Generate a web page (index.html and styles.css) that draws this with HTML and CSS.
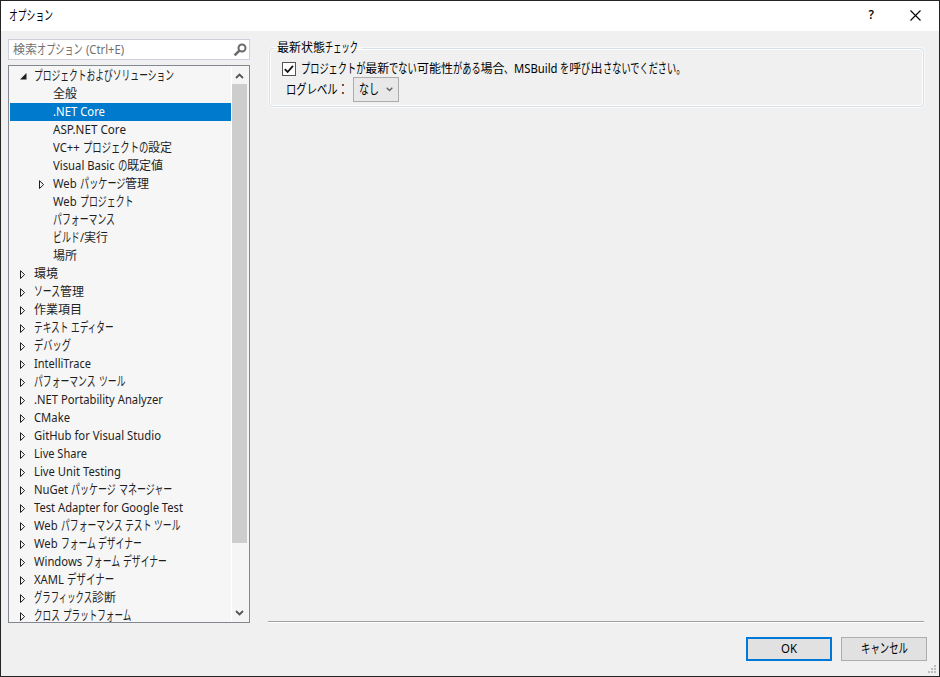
FILE: index.html
```html
<!DOCTYPE html>
<html lang="ja">
<head>
<meta charset="utf-8">
<title>オプション</title>
<link rel="stylesheet" href="styles.css">
</head>
<body>
<div class="window">
  <header class="titlebar">
    <span class="t" data-w="44">オプション</span>
    <span class="help">?</span>
    <svg class="close" width="11" height="11" viewBox="0 0 11 11"><path d="M.5.5l10 10M10.5.5l-10 10" fill="none" stroke="#000" stroke-width="1.1"/></svg>
  </header>
  <main class="content">
    <aside class="side">
      <div class="search">
        <span class="t" data-w="111">検索オプション (Ctrl+E)</span>
        <svg width="14" height="14" viewBox="0 0 14 14"><circle cx="9" cy="5" r="3.5" fill="none" stroke="#6a6a6a" stroke-width="2"/><path d="M6.4 7.6L1.6 12.4" stroke="#6a6a6a" stroke-width="2.6"/></svg>
      </div>
      <div class="tree">
        <div class="rows" id="rows"></div>
        <div class="scrollbar">
          <svg class="up" width="9" height="6" viewBox="0 0 9 6"><path d="M1 5l3.5-3.5L8 5" fill="none" stroke="#555" stroke-width="1.8"/></svg>
          <div class="thumb"></div>
          <svg class="down" width="9" height="6" viewBox="0 0 9 6"><path d="M1 1l3.5 3.5L8 1" fill="none" stroke="#555" stroke-width="1.8"/></svg>
        </div>
      </div>
    </aside>
    <section class="page">
      <fieldset class="group">
        <legend><span class="t" data-w="81">最新状態チェック</span></legend>
        <div class="check">
          <span class="box"><svg width="12" height="12" viewBox="0 0 12 12"><path d="M1.8 6.2l2.8 2.8 5.4-6.2" fill="none" stroke="#111" stroke-width="1.8"/></svg></span>
          <span class="t" data-w="384">プロジェクトが最新でない可能性がある場合、MSBuild を呼び出さないでください。</span>
        </div>
        <div class="level">
          <span class="t" data-w="62">ログレベル：</span>
          <div class="combo"><span class="t" data-w="20">なし</span><svg width="7" height="5" viewBox="0 0 7 5"><path d="M.7.7l2.8 2.8L6.3.7" fill="none" stroke="#606060" stroke-width="1.3"/></svg></div>
        </div>
      </fieldset>
    </section>
  </main>
  <footer class="footer">
    <div class="button primary"><span class="t" data-w="16">OK</span></div>
    <div class="button"><span class="t" data-w="47">キャンセル</span></div>
  </footer>
  <svg class="grip" width="8" height="8" viewBox="0 0 8 8" fill="#bdbdbd"><path d="M6 0h2v2H6zM3 3h2v2H3zM6 3h2v2H6zM0 6h2v2H0zM3 6h2v2H3zM6 6h2v2H6z"/></svg>
</div>
<script src="tree.js"></script>
</body>
</html>
```
FILE: styles.css
```css
* { box-sizing: border-box; }
html, body { margin: 0; height: 100%; }
body { font: 12px/18px "Noto Sans", "Noto Sans CJK JP", sans-serif; color: #1e1e1e; }
svg { display: block; flex: none; }
.window { position: relative; display: flex; flex-direction: column; width: 940px; height: 677px; background: #f0f0f0; border: 1px solid #242424; }
.titlebar { display: flex; align-items: center; height: 30px; padding: 0 18px 2px 8px; background: #fff; color: #000; }
.titlebar .t { margin-top: 1px; }
.titlebar .help { margin-left: auto; margin-right: 36px; font: 600 12px/18px "Open Sans", sans-serif; }
.content { display: flex; height: 592px; padding: 8px 15px 0 7px; }
.side { display: flex; flex-direction: column; gap: 5px; width: 242px; }
.search { display: flex; align-items: center; justify-content: space-between; height: 21px; padding: 0 2px 0 4px; border: 1px solid #cccedb; background: #fff; color: #717171; }
.tree { display: flex; height: 558px; padding: 1px; border: 1px solid #828790; background: #f6f6f6; }
.rows { width: 221px; height: 554px; }
.row { display: flex; align-items: center; height: 18px; padding-left: 9px; }
.row .t { line-height: 12px; }
.row.child { padding-left: 28px; }
.row.selected { background: #007acc; color: #fff; }
.mark { flex: none; width: 15px; height: 9px; }
.t { display: inline-block; white-space: pre; line-height: 18px; flex: none; }
.run { display: inline-block; white-space: pre; transform-origin: 0 60%; vertical-align: baseline; }
.scrollbar { display: flex; flex-direction: column; align-items: center; width: 17px; height: 554px; padding: 6px 2px 5px 0; border-left: 1px solid #fff; background: #f5f5f5; }
.thumb { width: 15px; height: 459px; margin-top: 5px; background: #cdcdcd; }
.down { margin-top: auto; }
.page { flex: 1; height: 583px; margin-left: 18px; border-bottom: 1px solid #a0a0a0; box-shadow: 0 1px #fff; }
.group { height: 68px; margin: 0 0 0 1px; padding: 0 0 0 12px; border: 1px solid #d5dfe5; border-radius: 4px; box-shadow: inset 0 0 0 1px #fff, 0 0 0 1px #fafafa; color: #000; }
legend { height: 18px; margin-left: -8px; padding: 0 4px 0 3px; }
.check { display: flex; align-items: center; gap: 5px; height: 18px; margin-top: 3px; }
.box { display: flex; width: 14px; height: 14px; border: 1px solid #555; background: #fff; }
.level { display: flex; align-items: center; height: 22px; padding-left: 4px; }
.level .t { padding-top: 1px; }
.combo { display: flex; align-items: center; justify-content: space-between; width: 46px; height: 25px; margin-left: 5px; padding: 0 5px; border: 1px solid #acacac; background: #e8e8e8; }
.footer { display: flex; justify-content: flex-end; gap: 9px; padding: 14px 12px 0 0; color: #000; }
.button { display: flex; align-items: center; justify-content: center; width: 86px; height: 24px; border: 1px solid #adadad; background: #e1e1e1; }
.button.primary { border: 2px solid #0078d7; }
.grip { position: absolute; right: 3px; bottom: 3px; }
```
FILE: tree.js
```js
// [label, width, depth, marker, selected]
const items = [
  ["プロジェクトおよびソリューション", 140, 0, "open"],
  ["全般", 24, 1], [".NET Core", 52, 1, "", true], ["ASP.NET Core", 73, 1],
  ["VC++ プロジェクトの設定", 119, 1], ["Visual Basic の既定値", 110, 1],
  ["Web パッケージ管理", 96, 1, "closed"], ["Web プロジェクト", 80, 1],
  ["パフォーマンス", 62, 1], ["ビルド/実行", 55, 1], ["場所", 24, 1],
  ["環境", 24, 0, "closed"], ["ソース管理", 50, 0, "closed"], ["作業項目", 48, 0, "closed"],
  ["テキスト エディター", 80, 0, "closed"], ["デバッグ", 37, 0, "closed"],
  ["IntelliTrace", 57, 0, "closed"], ["パフォーマンス ツール", 91, 0, "closed"],
  [".NET Portability Analyzer", 129, 0, "closed"], ["CMake", 36, 0, "closed"],
  ["GitHub for Visual Studio", 127, 0, "closed"], ["Live Share", 53, 0, "closed"],
  ["Live Unit Testing", 87, 0, "closed"], ["NuGet パッケージ マネージャー", 138, 0, "closed"],
  ["Test Adapter for Google Test", 149, 0, "closed"], ["Web パフォーマンス テスト ツール", 147, 0, "closed"],
  ["Web フォーム デザイナー", 108, 0, "closed"], ["Windows フォーム デザイナー", 133, 0, "closed"],
  ["XAML デザイナー", 80, 0, "closed"], ["グラフィックス診断", 82, 0, "closed"],
  ["クロス プラットフォーム", 97, 0, "closed"]
];
const marks = {
  open: '<path d="M7.5 1v6.5H1z" fill="#1e1e1e" stroke="none"/>',
  closed: '<path d="M1.5.7v7.8L5.6 4.6z" fill="none" stroke="#1e1e1e"/>'
};
document.getElementById("rows").innerHTML = items.map(([text, w, depth, mark, sel]) =>
  `<div class="row${depth ? " child" : ""}${sel ? " selected" : ""}"><svg class="mark" viewBox="0 0 15 9">${marks[mark] || ""}</svg><span class="t" data-w="${w}">${text}</span></div>`).join("");

// Kana are set narrow and slightly tall; kanji keep their full width.
const LATIN = 0.94;
const KANA_HEIGHT = 1.1;
document.querySelectorAll(".t").forEach(label => {
  const runs = label.textContent.match(/[\u3040-\u30ff\u3001\u3002\uff1a]+|[\u4e00-\u9fff]+|[^\u3001-\u9fff\uff1a]+/g);
  label.textContent = "";
  const parts = runs.map(text => {
    const el = document.createElement("span");
    el.className = "run";
    el.textContent = text;
    label.append(el);
    const kind = /[\u3040-\u30ff\u3001\uff1a]/.test(text) ? "kana" : /[\u4e00-\u9fff]/.test(text) ? "kanji" : "latin";
    return { el, kind, width: el.getBoundingClientRect().width };
  });
  const sum = k => parts.filter(p => p.kind === k).reduce((a, p) => a + p.width, 0);
  const target = Number(label.dataset.w);
  const kana = sum("kana"), kanji = sum("kanji"), latin = sum("latin");
  const latinScale = kana || kanji ? LATIN : target / latin;
  const kanaScale = kana ? (target - kanji - latin * latinScale) / kana : 1;
  parts.forEach(p => {
    const s = p.kind === "kana" ? kanaScale : p.kind === "latin" ? latinScale : 1;
    p.el.style.width = p.width * s + "px";
    p.el.style.transform = `scale(${s}, ${p.kind === "kana" ? KANA_HEIGHT : 1})`;
  });
});
```
